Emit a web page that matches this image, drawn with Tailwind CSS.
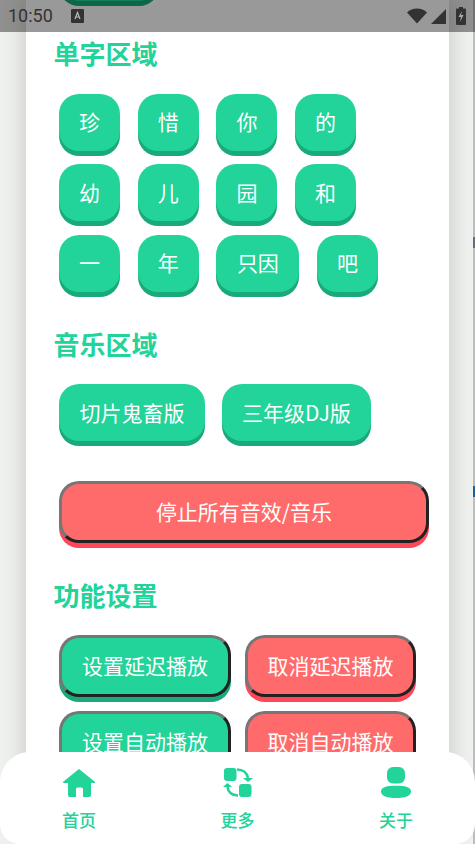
<!DOCTYPE html>
<html lang="zh">
<head>
<meta charset="utf-8">
<script src="https://cdn.jsdelivr.net/npm/@tailwindcss/browser@4"></script>
</head>
<body class="relative h-[844px] w-[475px] overflow-hidden bg-[#eff1ee] font-['Noto_Sans_CJK_SC',sans-serif]">
  <!-- page edge behind the card -->
  <div class="absolute top-0 right-0 h-full w-[2px] bg-[#bdbdbd]"></div>
  <div class="absolute top-[237px] right-0 h-[11px] w-[2px] bg-[#5f6f80]"></div>
  <div class="absolute top-[486px] right-0 h-[11px] w-[2px] bg-[#1f5f99]"></div>

  <!-- card -->
  <main class="relative mx-auto h-[844px] w-[423px] overflow-hidden bg-white pl-[28px] shadow-[0_0_22px_rgba(0,0,0,0.18)]">
    <div class="-mt-[60px] ml-[5px] h-[61px] w-[100px] rounded-b-[20px] bg-[#22d39a] shadow-[0_5px_0_#1aa97b]"></div>

    <h2 class="mt-[32px] -ml-[0.5px] h-[40px] text-[26px] leading-[40px] font-bold text-[#22d39a]">单字区域</h2>
    <div class="mt-[20.5px] ml-[5px] flex w-[320px] flex-wrap gap-x-[17.7px] gap-y-[13.5px]">
      <button class="h-[57px] w-[61px] rounded-[20px] bg-[#22d39a] text-[21px] text-white shadow-[0_5px_0_#1aa97b]">珍</button>
      <button class="h-[57px] w-[61px] rounded-[20px] bg-[#22d39a] text-[21px] text-white shadow-[0_5px_0_#1aa97b]">惜</button>
      <button class="h-[57px] w-[61px] rounded-[20px] bg-[#22d39a] text-[21px] text-white shadow-[0_5px_0_#1aa97b]">你</button>
      <button class="h-[57px] w-[61px] rounded-[20px] bg-[#22d39a] text-[21px] text-white shadow-[0_5px_0_#1aa97b]">的</button>
      <button class="h-[57px] w-[61px] rounded-[20px] bg-[#22d39a] text-[21px] text-white shadow-[0_5px_0_#1aa97b]">幼</button>
      <button class="h-[57px] w-[61px] rounded-[20px] bg-[#22d39a] text-[21px] text-white shadow-[0_5px_0_#1aa97b]">儿</button>
      <button class="h-[57px] w-[61px] rounded-[20px] bg-[#22d39a] text-[21px] text-white shadow-[0_5px_0_#1aa97b]">园</button>
      <button class="h-[57px] w-[61px] rounded-[20px] bg-[#22d39a] text-[21px] text-white shadow-[0_5px_0_#1aa97b]">和</button>
      <button class="h-[57px] w-[61px] rounded-[20px] bg-[#22d39a] text-[21px] text-white shadow-[0_5px_0_#1aa97b]">一</button>
      <button class="h-[57px] w-[61px] rounded-[20px] bg-[#22d39a] text-[21px] text-white shadow-[0_5px_0_#1aa97b]">年</button>
      <button class="h-[57px] w-[83px] rounded-[20px] bg-[#22d39a] text-[21px] text-white shadow-[0_5px_0_#1aa97b]">只因</button>
      <button class="h-[57px] w-[61px] rounded-[20px] bg-[#22d39a] text-[21px] text-white shadow-[0_5px_0_#1aa97b]">吧</button>
    </div>

    <h2 class="mt-[32.5px] -ml-[0.5px] h-[40px] text-[26px] leading-[40px] font-bold text-[#22d39a]">音乐区域</h2>
    <div class="mt-[20px] ml-[5px] flex gap-x-[17px]">
      <button class="h-[57px] w-[146px] rounded-[20px] bg-[#22d39a] text-[21px] text-white shadow-[0_5px_0_#1aa97b]">切片鬼畜版</button>
      <button class="h-[57px] w-[149px] rounded-[20px] bg-[#22d39a] text-[21px] text-white shadow-[0_5px_0_#1aa97b]">三年级DJ版</button>
    </div>

    <button class="mt-[40px] ml-[5px] h-[62px] w-[370px] rounded-[20px] border-[3px] border-t-[#767676] border-r-[#222] border-b-[#222] border-l-[#767676] bg-[#ff6b6b] text-[21px] text-white shadow-[0_5px_0_#ff4757]">停止所有音效/音乐</button>

    <h2 class="mt-[32px] -ml-[0.5px] h-[40px] text-[26px] leading-[40px] font-bold text-[#22d39a]">功能设置</h2>
    <div class="mt-[20px] ml-[5px] grid w-[357px] grid-cols-[172px_171px] gap-x-[14px] gap-y-[14px]">
      <button class="h-[62px] rounded-[20px] border-[3px] border-t-[#767676] border-r-[#222] border-b-[#222] border-l-[#767676] bg-[#22d39a] text-[21px] text-white shadow-[0_5px_0_#1aa97b]">设置延迟播放</button>
      <button class="h-[62px] rounded-[20px] border-[3px] border-t-[#767676] border-r-[#222] border-b-[#222] border-l-[#767676] bg-[#ff6b6b] text-[21px] text-white shadow-[0_5px_0_#ff4757]">取消延迟播放</button>
      <button class="h-[62px] rounded-[20px] border-[3px] border-t-[#767676] border-r-[#222] border-b-[#222] border-l-[#767676] bg-[#22d39a] text-[21px] text-white shadow-[0_5px_0_#1aa97b]">设置自动播放</button>
      <button class="h-[62px] rounded-[20px] border-[3px] border-t-[#767676] border-r-[#222] border-b-[#222] border-l-[#767676] bg-[#ff6b6b] text-[21px] text-white shadow-[0_5px_0_#ff4757]">取消自动播放</button>
    </div>
  </main>

  <!-- status bar overlay -->
  <div class="absolute inset-x-0 top-0 flex h-[32px] items-center bg-black/40 pr-[9px] pl-[8px] text-[#333]">
    <span class="font-['Roboto',sans-serif] text-[18px] leading-none">10:50</span>
    <svg class="ml-[18px]" width="13" height="14" viewBox="0 0 13 14"><rect width="13" height="14" rx="1" fill="#333"/><path d="M4 10 L6.5 3.5 L9 10 M5 8h3" stroke="#bbb" stroke-width="1.2" fill="none"/></svg>
    <svg class="ml-auto" width="20" height="16" viewBox="0 0 20 16"><path d="M0 4.5 C5 -1 15 -1 20 4.500 L10 15.500 Z" fill="#333"/></svg>
    <svg class="ml-[4px]" width="15" height="15" viewBox="0 0 15 15"><path d="M15 0 V15 H0 Z" fill="#333"/></svg>
    <svg class="ml-[10px]" width="10" height="18" viewBox="0 0 10 18"><path d="M3 0h4v1.500h2a1 1 0 0 1 1 1V17a1 1 0 0 1-1 1H1a1 1 0 0 1-1-1V2.500a1 1 0 0 1 1-1h2z" fill="#333"/><path d="M6 4 L2.500 10 H5 L4 15 L7.500 8 H5 Z" fill="#aaa"/></svg>
  </div>

  <!-- bottom nav overlay -->
  <nav class="absolute inset-x-0 top-[752px] flex h-[92px] items-start justify-between rounded-t-[30px] rounded-b-[20px] bg-white px-[62px] pt-[15px] text-[17px] font-medium text-[#22d39a]">
    <div class="flex w-[34px] flex-col items-center">
      <svg width="32" height="32" viewBox="0 0 32 32" fill="#22d39a"><path d="M16 2 L31.500 14.500 a0.800 0.800 0 0 1 -0.500 1.500 H28 V28 a2 2 0 0 1 -2 2 H20 V22 a1.500 1.500 0 0 0 -1.500 -1.500 H14.500 a1.500 1.500 0 0 0 -1.500 1.500 V30 H7 a2 2 0 0 1 -2 -2 V16 H1 a0.800 0.800 0 0 1 -0.500 -1.500 Z"/></svg>
      <span class="mt-[8px] leading-[25px] whitespace-nowrap">首页</span>
    </div>
    <div class="flex w-[34px] flex-col items-center">
      <svg width="30" height="32" viewBox="0 0 30 32" fill="#22d39a"><rect x="1" y="1" width="12.500" height="13" rx="3"/><rect x="16" y="17" width="12.500" height="13" rx="3"/><path d="M14 2.500 C20 2.500 24 6 25 11" fill="none" stroke="#22d39a" stroke-width="2.600"/><path d="M20 11 H30 L25 15 Z"/><path d="M15 28.500 C9 28.500 5 25 4.500 20" fill="none" stroke="#22d39a" stroke-width="2.600"/><path d="M0 20 H9 L4.500 16 Z"/></svg>
      <span class="mt-[8px] leading-[25px] whitespace-nowrap">更多</span>
    </div>
    <div class="flex w-[34px] flex-col items-center">
      <svg width="32" height="32" viewBox="0 0 32 32" fill="#22d39a"><rect x="7" y="0" width="18" height="16.500" rx="6"/><path d="M1 24.500 C1 20 7 18.800 16 18.800 C25 18.800 31 20 31 24.500 C31 29 25 31 16 31 C7 31 1 29 1 24.500 Z"/></svg>
      <span class="mt-[8px] leading-[25px] whitespace-nowrap">关于</span>
    </div>
  </nav>
</body>
</html>
